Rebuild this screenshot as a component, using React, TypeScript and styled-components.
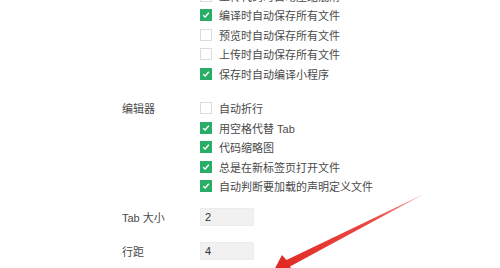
import * as React from "react";
import styled, { createGlobalStyle } from "styled-components";

const Global = createGlobalStyle`
  html, body {
    margin: 0;
    padding: 0;
    background: #fff;
  }
  body {
    width: 500px;
    height: 268px;
    overflow: hidden;
    font-family: "Liberation Sans", "Noto Sans CJK SC", sans-serif;
  }
`;

const Page = styled.div`
  position: relative;
  width: 500px;
  height: 268px;
  overflow: hidden;
  padding-left: 122px;
  box-sizing: border-box;
  display: flex;
  flex-direction: column;
`;

const Section = styled.div<{ $top: number }>`
  display: grid;
  grid-template-columns: 78px 1fr;
  margin-top: ${(p) => p.$top}px;
`;

const Label = styled.div<{ $h: number }>`
  height: ${(p) => p.$h}px;
  display: flex;
  align-items: center;
  font-size: 11px;
  color: #4a4a4a;
`;

const List = styled.div`
  display: flex;
  flex-direction: column;
`;

const Row = styled.div`
  height: 19.5px;
  display: flex;
  align-items: center;
  gap: 7px;
  font-size: 11px;
  color: #4a4a4a;
  white-space: nowrap;
`;

const Box = styled.span<{ $on: boolean }>`
  width: 12px;
  height: 12px;
  box-sizing: border-box;
  border: 1px solid ${(p) => (p.$on ? "#2aae67" : "#dcdcdc")};
  background: ${(p) => (p.$on ? "#2aae67" : "#fff")};
  display: flex;
  align-items: center;
  justify-content: center;
  flex-shrink: 0;
`;

const Field = styled.div`
  width: 54px;
  height: 18px;
  box-sizing: border-box;
  background: #f1f1f1;
  border: 1px solid #ececec;
  font-size: 11px;
  color: #333;
  padding-left: 4px;
  display: flex;
  align-items: center;
`;

const FieldCell = styled.div`
  height: 34px;
  display: flex;
  align-items: center;
`;

const Overlay = styled.svg`
  position: absolute;
  left: 0;
  top: 0;
  pointer-events: none;
`;

const Check = ({ on }: { on: boolean }) => (
  <Box $on={on}>
    {on && (
      <svg width="8" height="8" viewBox="0 0 8 8">
        <path d="M1.2 4.2 L3.2 6 L6.8 1.8" fill="none" stroke="#fff" strokeWidth="1.4" />
      </svg>
    )}
  </Box>
);

const compile = [
  { t: "上传代码时自动压缩混淆", on: false },
  { t: "编译时自动保存所有文件", on: true },
  { t: "预览时自动保存所有文件", on: false },
  { t: "上传时自动保存所有文件", on: false },
  { t: "保存时自动编译小程序", on: true },
];

const editor = [
  { t: "自动折行", on: false },
  { t: "用空格代替 Tab", on: true },
  { t: "代码缩略图", on: true },
  { t: "总是在新标签页打开文件", on: true },
  { t: "自动判断要加载的声明定义文件", on: true },
];

export default function App() {
  return (
    <>
      <Global />
      <Page>
        <Section $top={-14}>
          <Label $h={19.5} />
          <List>
            {compile.map((r) => (
              <Row key={r.t}>
                <Check on={r.on} />
                <span>{r.t}</span>
              </Row>
            ))}
          </List>
        </Section>
        <Section $top={14.75}>
          <Label $h={19.5}>编辑器</Label>
          <List>
            {editor.map((r) => (
              <Row key={r.t}>
                <Check on={r.on} />
                <span>{r.t}</span>
              </Row>
            ))}
          </List>
        </Section>
        <Section $top={4}>
          <Label $h={34}>Tab 大小</Label>
          <FieldCell>
            <Field>2</Field>
          </FieldCell>
        </Section>
        <Section $top={0}>
          <Label $h={34}>行距</Label>
          <FieldCell>
            <Field>4</Field>
          </FieldCell>
        </Section>
        <Overlay width="500" height="268" viewBox="0 0 500 268">
          <defs>
            <linearGradient id="arrowGrad" x1="424" y1="194" x2="280" y2="268" gradientUnits="userSpaceOnUse">
              <stop offset="0" stopColor="#f4a0a0" />
              <stop offset="0.35" stopColor="#ea4a45" />
              <stop offset="1" stopColor="#e12a26" />
            </linearGradient>
          </defs>
          <polygon
            points="424,194 290,266.5 294,272 272,274 282,255 286.5,260 "
            fill="url(#arrowGrad)"
          />
        </Overlay>
      </Page>
    </>
  );
}
